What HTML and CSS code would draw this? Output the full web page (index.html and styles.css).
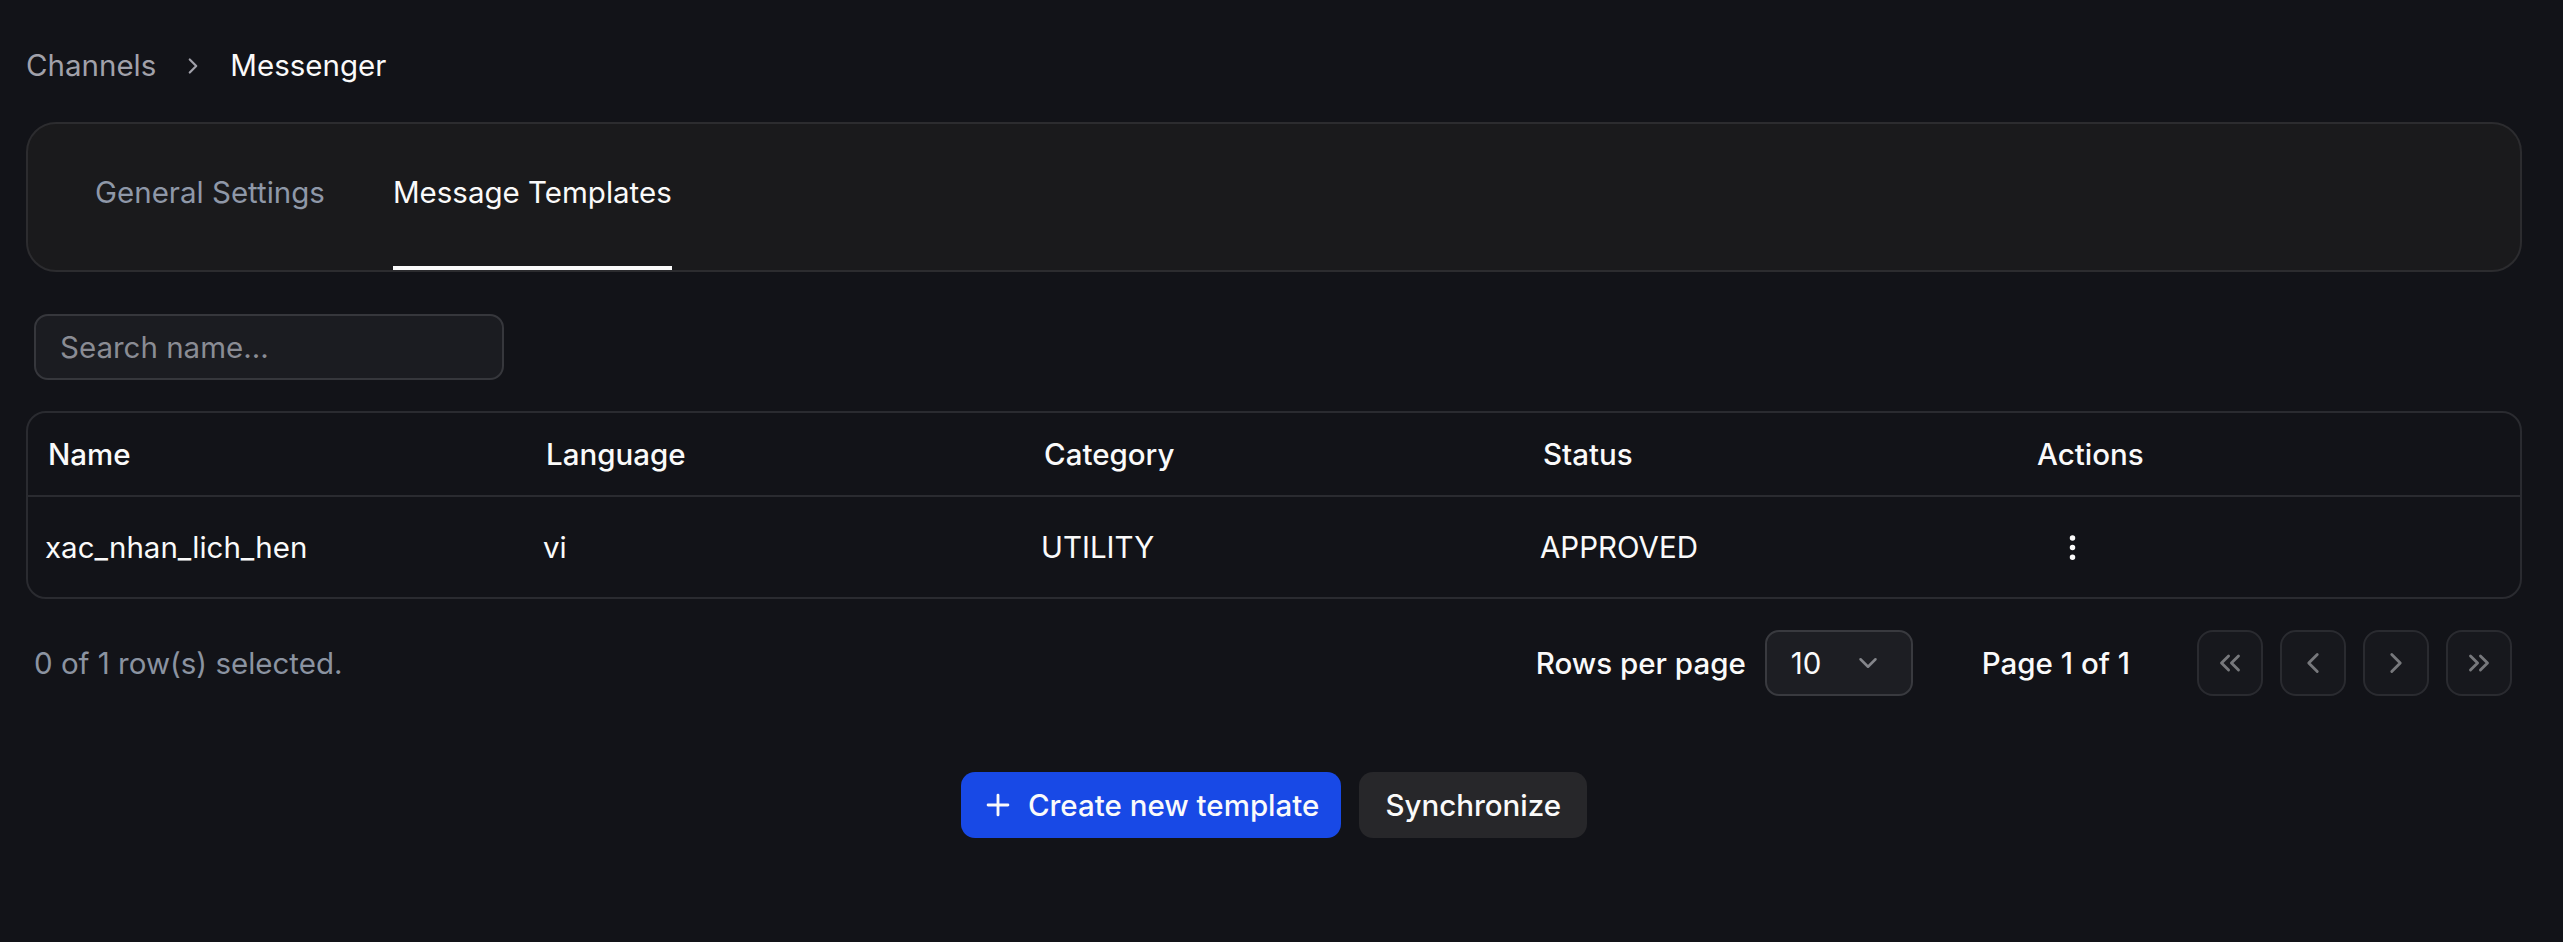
FILE: index.html
```html
<!DOCTYPE html>
<html lang="en">

<head>
    <meta charset="UTF-8">
    <meta name="viewport" content="width=device-width, initial-scale=1.0">
    <title>Messenger - Message Templates</title>
    <link rel="stylesheet" href="styles.css">
</head>

<body>
    <main class="page">
        <!-- Breadcrumb -->
        <nav class="crumbs">
            <span class="crumb">Channels</span>
            <svg class="crumb-sep" viewBox="0 0 24 24" fill="none" stroke="currentColor" stroke-width="2" stroke-linecap="round" stroke-linejoin="round"><path d="m9 18 6-6-6-6"/></svg>
            <span class="crumb current">Messenger</span>
        </nav>

        <!-- Tabs -->
        <div class="tabs-card">
            <div class="tabs">
                <button class="tab">General Settings</button>
                <button class="tab active">Message Templates</button>
            </div>
        </div>

        <div class="toolbar">
            <input type="text" class="search" placeholder="Search name...">
        </div>

        <!-- Templates table -->
        <div class="table-wrap">
            <table class="templates">
                <colgroup>
                    <col class="col-name">
                    <col class="col-lang">
                    <col class="col-cat">
                    <col class="col-status">
                    <col>
                </colgroup>
                <thead>
                    <tr>
                        <th>Name</th>
                        <th>Language</th>
                        <th>Category</th>
                        <th>Status</th>
                        <th>Actions</th>
                    </tr>
                </thead>
                <tbody>
                    <tr>
                        <td>xac_nhan_lich_hen</td>
                        <td>vi</td>
                        <td>UTILITY</td>
                        <td>APPROVED</td>
                        <td class="actions-cell">
                            <button class="row-menu">
                                <svg viewBox="0 0 24 24" fill="none" stroke="currentColor" stroke-width="2" stroke-linecap="round" stroke-linejoin="round"><circle cx="12" cy="12" r="1"/><circle cx="12" cy="5" r="1"/><circle cx="12" cy="19" r="1"/></svg>
                            </button>
                        </td>
                    </tr>
                </tbody>
            </table>
        </div>

        <!-- Pagination -->
        <div class="table-footer">
            <div class="selected-count">0 of 1 row(s) selected.</div>
            <div class="pager">
                <span class="pager-label">Rows per page</span>
                <div class="page-size">
                    <span>10</span>
                    <svg viewBox="0 0 24 24" fill="none" stroke="currentColor" stroke-width="2" stroke-linecap="round" stroke-linejoin="round"><path d="m6 9 6 6 6-6"/></svg>
                </div>
                <span class="pager-label page-info">Page 1 of 1</span>
                <div class="pager-buttons">
                    <button class="page-btn" disabled>
                        <svg viewBox="0 0 24 24" fill="none" stroke="currentColor" stroke-width="2" stroke-linecap="round" stroke-linejoin="round"><path d="m11 17-5-5 5-5"/><path d="m18 17-5-5 5-5"/></svg>
                    </button>
                    <button class="page-btn" disabled>
                        <svg viewBox="0 0 24 24" fill="none" stroke="currentColor" stroke-width="2" stroke-linecap="round" stroke-linejoin="round"><path d="m15 18-6-6 6-6"/></svg>
                    </button>
                    <button class="page-btn" disabled>
                        <svg viewBox="0 0 24 24" fill="none" stroke="currentColor" stroke-width="2" stroke-linecap="round" stroke-linejoin="round"><path d="m9 18 6-6-6-6"/></svg>
                    </button>
                    <button class="page-btn" disabled>
                        <svg viewBox="0 0 24 24" fill="none" stroke="currentColor" stroke-width="2" stroke-linecap="round" stroke-linejoin="round"><path d="m6 17 5-5-5-5"/><path d="m13 17 5-5-5-5"/></svg>
                    </button>
                </div>
            </div>
        </div>

        <div class="actions-bar">
            <button class="btn btn-primary">
                <svg viewBox="0 0 24 24" fill="none" stroke="currentColor" stroke-width="2" stroke-linecap="round" stroke-linejoin="round"><path d="M5 12h14"/><path d="M12 5v14"/></svg>
                Create new template
            </button>
            <button class="btn btn-secondary">Synchronize</button>
        </div>
    </main>
</body>

</html>
```

FILE: styles.css
```css
body {
    margin: 0;
    background-color: #121318;
    color: #fafafa;
    font-family: Inter, "Noto Sans", sans-serif;
    font-size: 29.5px;
    line-height: 43px;
}

button,
input {
    font-family: inherit;
    font-size: inherit;
    line-height: inherit;
    color: inherit;
}

.page {
    padding: 44px 41px 0 26px;
}

/* breadcrumb */
.crumbs {
    display: flex;
    align-items: center;
    gap: 24px;
}

.crumb {
    color: #a1a1aa;
}

.crumb.current {
    color: #fafafa;
}

.crumb-sep {
    width: 26px;
    height: 26px;
    color: #a1a1aa;
}

/* tabs */
.tabs-card {
    margin-top: 35px;
    background-color: #1a1a1c;
    border: 2px solid #2c2c2f;
    border-radius: 30px;
    padding: 47px 67px 0;
}

.tabs {
    display: flex;
    gap: 68px;
}

.tab {
    background: none;
    border: none;
    border-bottom: 4px solid transparent;
    padding: 0 0 52px;
    color: #8f98a8;
    cursor: pointer;
}

.tab.active {
    color: #fafafa;
    border-bottom-color: #fafafa;
}

/* search */
.toolbar {
    margin-top: 42px;
    padding-left: 8px;
}

.search {
    width: 470px;
    height: 66px;
    box-sizing: border-box;
    padding: 0 24px;
    background-color: #1b1c21;
    border: 2px solid #36373c;
    border-radius: 14px;
    outline: none;
}

.search::placeholder {
    color: #8a8c94;
}

/* table */
.table-wrap {
    margin-top: 31px;
    border: 2px solid #2a2b30;
    border-radius: 20px;
    overflow: hidden;
}

.templates {
    width: 100%;
    table-layout: fixed;
    border-collapse: separate;
    border-spacing: 0;
}

.col-name,
.col-lang {
    width: 498px;
}

.col-cat {
    width: 499px;
}

.col-status {
    width: 494px;
}

.templates th {
    height: 82px;
    padding: 0 0 0 20px;
    text-align: left;
    font-weight: 500;
    border-bottom: 2px solid #2a2b30;
}

.templates td {
    height: 100px;
    padding: 0 0 0 17px;
}

.actions-cell {
    padding-left: 23px !important;
}

.row-menu {
    width: 64px;
    height: 64px;
    display: flex;
    align-items: center;
    justify-content: center;
    background: none;
    border: none;
    padding: 0;
    cursor: pointer;
}

.row-menu svg {
    width: 33px;
    height: 33px;
}

/* pagination */
.table-footer {
    margin-top: 31px;
    display: flex;
    justify-content: space-between;
    align-items: center;
    padding: 0 10px 0 8px;
}

.selected-count {
    color: #8b93a1;
}

.pager {
    display: flex;
    align-items: center;
}

.pager-label {
    font-weight: 500;
}

.page-size {
    margin-left: 19px;
    width: 148px;
    height: 66px;
    box-sizing: border-box;
    display: flex;
    align-items: center;
    justify-content: space-between;
    padding: 0 28px 0 24px;
    background-color: #1d1e23;
    border: 2px solid #393a3f;
    border-radius: 14px;
}

.page-size svg {
    width: 30px;
    height: 30px;
    color: #85868b;
}

.page-info {
    margin-left: 69px;
}

.pager-buttons {
    display: flex;
    gap: 17px;
    margin-left: 67px;
}

.page-btn {
    width: 66px;
    height: 66px;
    box-sizing: border-box;
    display: flex;
    align-items: center;
    justify-content: center;
    padding: 0;
    background-color: #17181d;
    border: 2px solid #2a2b30;
    border-radius: 16px;
    color: #77787c;
}

.page-btn svg {
    width: 34px;
    height: 34px;
}

/* bottom buttons */
.actions-bar {
    margin-top: 76px;
    display: flex;
    justify-content: center;
    gap: 18px;
}

.btn {
    height: 66px;
    display: flex;
    align-items: center;
    border: none;
    border-radius: 14px;
    font-weight: 500;
    cursor: pointer;
}

.btn svg {
    width: 34px;
    height: 34px;
}

.btn-primary {
    gap: 13px;
    padding: 0 22px 0 20px;
    background-color: #1849e6;
    color: #fafafa;
}

.btn-secondary {
    padding: 0 26px;
    background-color: #27272a;
    color: #fafafa;
}
```
